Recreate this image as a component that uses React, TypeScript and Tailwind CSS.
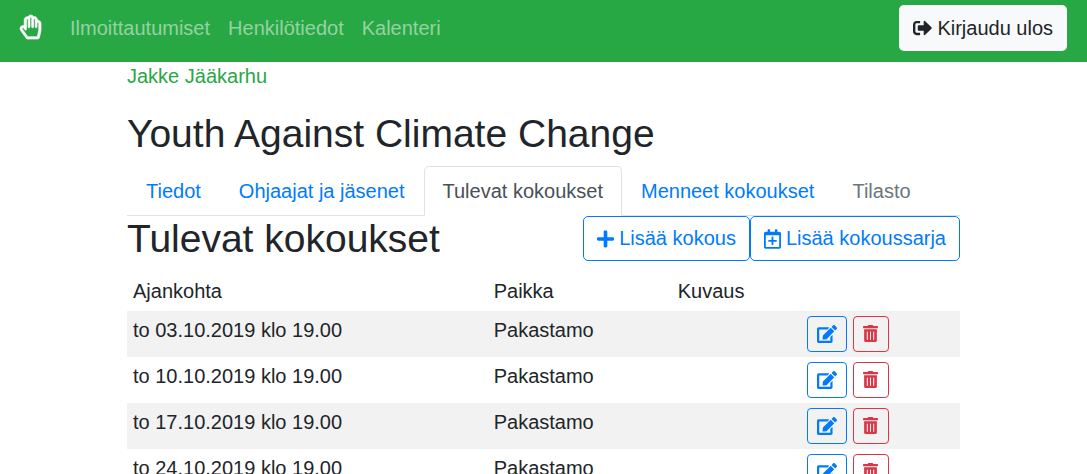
import { FaEdit, FaPlus, FaRegCalendarPlus, FaRegHandPaper, FaSignOutAlt, FaTrashAlt } from "react-icons/fa";

const navLinks = ["Ilmoittautumiset", "Henkilötiedot", "Kalenteri"];

const meetings = [
  { time: "to 03.10.2019 klo 19.00", place: "Pakastamo", description: "" },
  { time: "to 10.10.2019 klo 19.00", place: "Pakastamo", description: "" },
  { time: "to 17.10.2019 klo 19.00", place: "Pakastamo", description: "" },
  { time: "to 24.10.2019 klo 19.00", place: "Pakastamo", description: "" },
];

const tabClass = "rounded-t-[5px] border border-transparent px-[18px] pt-[10px] pb-[9px]";
const outlineButton =
  "flex items-center gap-[5px] rounded-[5px] border border-[#007bff] px-[13px] py-[7px] whitespace-nowrap text-[#007bff]";

function Navbar() {
  return (
    <nav className="flex items-center bg-[#28a745] px-5 pt-[5px] pb-[11px]">
      <a href="#" aria-label="Etusivu" className="mr-5 pb-[2px] text-white">
        <FaRegHandPaper className="h-6 w-[21px] overflow-visible stroke-current stroke-[14]" />
      </a>
      <ul className="flex flex-1">
        {navLinks.map((label) => (
          <li key={label}>
            <a href="#" className="block px-[9px] text-white/50">
              {label}
            </a>
          </li>
        ))}
      </ul>
      <button type="button" className="flex h-[46px] items-center gap-[5px] rounded-[5px] bg-[#f8f9fa] px-[14px] whitespace-nowrap">
        <FaSignOutAlt className="h-5 w-[19px]" />
        Kirjaudu ulos
      </button>
    </nav>
  );
}

function Tabs() {
  return (
    <ul className="flex border-b border-[#dee2e6] text-[#007bff]">
      <li className="-mb-px flex">
        <a href="#" className={tabClass}>Tiedot</a>
      </li>
      <li className="-mb-px flex">
        <a href="#" className={tabClass}>Ohjaajat ja jäsenet</a>
      </li>
      <li className="-mb-px flex">
        <a
          href="#"
          aria-current="page"
          className="rounded-t-[5px] border border-[#dee2e6] border-b-white bg-white px-[18px] pt-[10px] pb-[9px] text-[#495057]"
        >
          Tulevat kokoukset
        </a>
      </li>
      <li className="-mb-px flex">
        <a href="#" className={tabClass}>Menneet kokoukset</a>
      </li>
      <li className="-mb-px flex">
        <a
          href="#"
          aria-disabled="true"
          className="rounded-t-[5px] border border-transparent px-[18px] pt-[10px] pb-[9px] text-[#6c757d]"
        >
          Tilasto
        </a>
      </li>
    </ul>
  );
}

function MeetingTable() {
  return (
    <table className="w-full table-fixed border-collapse text-left">
      <colgroup>
        <col className="w-[43.3%]" />
        <col className="w-[22.1%]" />
        <col className="w-[15.5%]" />
        <col className="w-[19.1%]" />
      </colgroup>
      <thead>
        <tr>
          <th scope="col" className="px-[6px] py-[5px] font-normal">Ajankohta</th>
          <th scope="col" className="px-[6px] py-[5px] font-normal">Paikka</th>
          <th scope="col" className="px-[6px] py-[5px] font-normal">Kuvaus</th>
          <td />
        </tr>
      </thead>
      <tbody>
        {meetings.map((meeting) => (
          <tr key={meeting.time} className="align-top odd:bg-[#f2f2f2]">
            <td className="px-[6px] py-[5px]">{meeting.time}</td>
            <td className="px-[6px] py-[5px]">{meeting.place}</td>
            <td className="px-[6px] py-[5px]">{meeting.description}</td>
            <td className="px-[6px] py-[5px]">
              <div className="flex gap-[6px]">
                <button
                  type="button"
                  aria-label="Muokkaa"
                  className="flex h-9 w-10 items-center justify-center rounded-[4px] border border-[#007bff] pb-px text-[#007bff]"
                >
                  <FaEdit className="size-5" />
                </button>
                <button
                  type="button"
                  aria-label="Poista"
                  className="flex h-9 w-9 items-center justify-center rounded-[4px] border border-[#dc3545] pb-px text-[#dc3545]"
                >
                  <FaTrashAlt className="size-[17px]" />
                </button>
              </div>
            </td>
          </tr>
        ))}
      </tbody>
    </table>
  );
}

export default function App() {
  return (
    <div className="min-h-screen bg-white font-['Liberation_Sans',Arial,sans-serif] text-[20px] leading-[29px] text-[#212529]">
      <Navbar />
      <main className="mx-auto max-w-[833px]">
        <a href="#" className="block text-[#28a745]">Jakke Jääkarhu</a>
        <h1 className="mt-5 mb-[9px] text-[39px] leading-[46px]">Youth Against Climate Change</h1>
        <Tabs />
        <div className="mb-[10px] flex items-start justify-between">
          <h2 className="text-[39px] leading-[46px]">Tulevat kokoukset</h2>
          <div className="flex">
            <button type="button" className={outlineButton}>
              <FaPlus className="h-5 w-[17px]" />
              Lisää kokous
            </button>
            <button type="button" className={outlineButton}>
              <FaRegCalendarPlus className="h-5 w-[17px]" />
              Lisää kokoussarja
            </button>
          </div>
        </div>
        <MeetingTable />
      </main>
    </div>
  );
}
